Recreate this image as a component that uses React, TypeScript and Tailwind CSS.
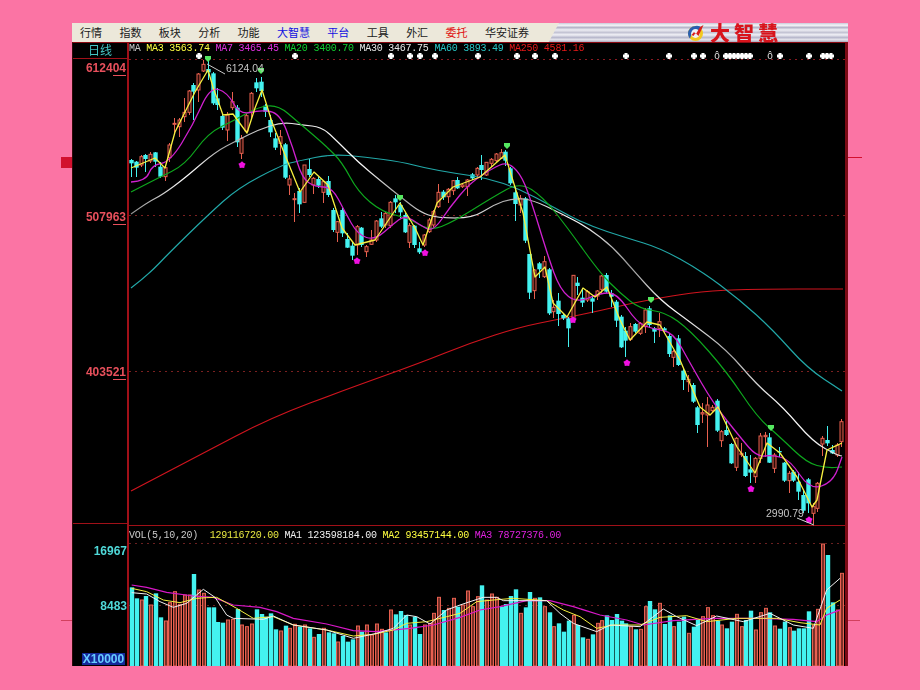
const MENU: [string, string][] = [
  ["行情", "text-[#202020]"], ["指数", "text-[#202020]"], ["板块", "text-[#202020]"], ["分析", "text-[#202020]"],
  ["功能", "text-[#202020]"], ["大智慧", "text-[#1010e0]"], ["平台", "text-[#1010e0]"], ["工具", "text-[#202020]"],
  ["外汇", "text-[#202020]"], ["委托", "text-[#e01010]"], ["华安证券", "text-[#202020]"],
];

type C = [string, number, number, number, number];
// candle data in 3x crop units: [kind, body top, body bottom, wick top, wick bottom]
const S1: C[] = [
  ["c",315,325,312,365],["c",320,338,318,365],["r",305,330,300,335],["c",300,312,296,350],["r",298,318,292,325],["c",292,320,290,335],["c",335,365,320,370],["r",338,365,330,378],
  ["r",270,308,265,320],["r",205,208,190,235],["r",195,215,190,245],["r",172,185,130,200],["r",108,172,105,180],["c",90,110,85,195],["r",57,105,55,140],["r",28,48,15,50],
  ["c",42,52,15,75],["c",55,145,50,150],["c",130,150,100,165],["c",183,218,175,225],["r",180,225,170,258],["r",140,158,110,165],["c",158,262,150,275],["r",250,295,240,312],
  ["r",182,228,175,235],["r",115,172,112,190],["c",82,100,70,112],["c",80,108,65,125],["c",152,170,148,185],["c",195,232,180,245],["c",250,278,235,285],["r",245,265,225,300],
  ["c",268,368,265,372],["r",372,390,360,420],["r",431,434,415,500],["c",408,448,400,475],["r",330,442,330,445],["c",342,360,312,365],["r",370,390,365,418],["c",372,392,365,400],
  ["r",380,412,378,445],["c",378,420,362,425],["c",465,525,460,530],["r",500,532,498,560],["c",465,535,460,545],["c",552,578,535,580],["c",572,602,560,615],["r",515,570,510,600],
  ["c",518,570,515,575],["r",575,590,570,605],["r",555,568,525,570],["r",498,555,495,560],["c",490,515,470,520],["r",475,510,470,520],["r",442,512,438,520],["c",430,442,420,475],
  ["c",450,472,440,490],["c",480,532,475,535],["r",512,562,505,578],["c",512,570,510,580],["c",580,592,560,598],
];
const S2: C[] = [
  ["r",315,345,312,350],["r",270,305,265,310],["r",245,285,240,290],["r",187,230,163,235],["c",185,202,180,210],["r",178,200,175,220],["r",152,182,150,195],["c",150,175,142,178],
  ["r",165,170,160,175],["r",150,170,148,198],["c",133,145,128,150],["r",115,135,112,140],["c",105,120,75,150],["r",97,135,95,138],["r",88,100,85,110],["r",72,92,70,95],
  ["r",68,85,58,88],["c",65,92,60,108],["c",115,160,112,165],["c",187,222,170,272],["r",205,225,195,250],["c",205,332,200,340],["c",372,488,372,508],["r",420,482,418,508],
  ["c",400,418,395,445],["r",395,440,378,445],["c",418,550,415,555],["r",532,545,510,565],["c",512,552,490,588],["c",555,565,550,570],["c",565,595,560,650],["r",436,565,435,570],
  ["c",458,468,442,495],["c",503,518,475,530],["r",485,510,480,515],["c",505,515,500,548],["r",483,498,480,510],["r",438,478,436,490],["c",435,485,430,490],["c",490,500,480,530],
  ["c",515,572,510,590],["c",560,652,555,655],["c",602,632,590,682],["r",590,628,578,632],["c",582,605,580,610],["r",580,610,575,615],
];
const S3: C[] = [
  ["r",30,80,25,100],["c",25,75,18,85],["c",85,95,80,130],["r",65,85,38,110],["c",85,92,80,98],["c",108,162,100,170],["r",155,172,150,200],["c",115,195,105,198],
  ["c",212,240,205,270],["r",238,245,225,275],["c",255,305,250,310],["c",322,375,318,400],["r",338,342,310,370],["r",315,345,290,440],["r",322,332,315,340],["c",302,392,298,395],
  ["r",395,422,390,440],["c",390,405,362,408],["c",432,490,428,492],["r",415,502,410,512],["r",460,464,430,470],["c",468,528,455,530],["c",508,518,465,548],["r",475,530,470,550],
  ["r",408,475,400,490],["r",406,410,395,470],["c",412,488,400,490],["r",465,505,460,518],["c",453,457,440,470],["c",488,542,485,545],["r",520,542,512,580],["c",515,542,510,545],
  ["c",545,575,515,600],["c",585,632,570,640],["c",538,610,535,640],["r",620,640,610,672],["r",550,625,545,635],["r",415,432,408,468],["c",420,430,378,438],["c",450,460,435,462],
  ["r",435,465,430,470],["r",365,425,358,440],
];
const CANDLES: C[] = [
  ...S1.map((c): C => [c[0], 55 + c[1] / 3, 55 + c[2] / 3, 55 + c[3] / 3, 55 + c[4] / 3]),
  ...S2.map((c): C => [c[0], 130 + c[1] / 3, 130 + c[2] / 3, 130 + c[3] / 3, 130 + c[4] / 3]),
  ...S3.map((c): C => [c[0], 300 + c[1] / 3, 300 + c[2] / 3, 300 + c[3] / 3, 300 + c[4] / 3]),
];

const VOL: [string, number][] = ([
  "c232","c265","r270","c258","r285","c250","c322","r333","r278","r245","r283","r255","r255","c192","r240","r250","c292","c292","c336","c338","r330","r328","c297","r345","r350","r342","c298","c312","c320","c310",
  "c358","r363","c347","r355","r343","c350","r345","c355","r382","c372","r355","c367","c370","r396","c378","c395","c388","r348","c365","r345","r375","r342","r358","c367","r300","c313","c303","c315","r345","c320",
  "c372","r345","r340","r310","r262","c300","r295","r265","c290","r285","r243","r290","r260","c226","r270","r252","r262","c290","c282","c258","c238","r310","c292","c246","r265","c262","r290","c307","r350","c340",
  "c365","c332","r316","c345","c382","r388","c373","r340","r332","c316","c330","c312","c332","c340","r350","c358","r358","r290","c273","c298","r280","c342","c316","r350","c335","c320","r370","c350","c330","r320",
  "r293","r317","c332","r345","c355","c335","r313","r350","c330","c302","r360","r308","r295","c307","r348","c356","c335","r353","c362","c355","c355","c304","r345","r298","r102","c135","c277","r300","r190",
] as string[]).map((s): [string, number] => [s[0], 510 + Number(s.slice(1)) / 3]);

type P = [number, number][];
const MA250: P = [[131,491],[200,455],[270,418],[350,388],[420,363],[470,343],[520,327],[560,319],[603,310],[633,303],[660,298],[700,291.5],[750,289],[843,289]];
const MA60: P = [[131,288],[148,275],[170,252],[208,215],[238,188],[282,165],[298,161],[332,154],[365,157],[402,162],[425,168],[453,173],[487,178],[520,189],[553,207],[587,225],[627,238],[660,248],[700,270],[740,300],[773,330],[807,368],[842,391]];
const MA30: P = [[131,214],[148,202],[162,195],[185,178],[215,152],[238,140],[258,130],[282,122],[302,125],[322,127],[338,142],[358,162],[382,182],[402,198],[420,212],[437,218],[473,218],[493,205],[513,198],[533,200],[560,213],[587,227],[613,247],[633,270],[660,300],[690,322],[727,350],[757,385],[783,407],[813,442],[837,455],[842,456]];
const MA20: P = [[131,192],[158,178],[185,165],[208,133],[235,120],[258,107],[278,105],[298,122],[325,145],[342,162],[358,192],[382,212],[408,218],[430,231],[453,222],[493,197],[520,182],[543,197],[567,227],[600,273],[620,293],[640,309],[665,312],[690,330],[727,372],[757,417],[780,437],[807,463],[827,468],[842,467]];
const MA7: P = [[131,182],[146,181],[152,165],[170,162],[193,125],[210,87],[227,92],[240,115],[260,110],[280,113],[293,148],[302,178],[315,187],[332,187],[345,212],[358,235],[375,240],[392,225],[405,215],[420,225],[433,232],[450,207],[470,183],[493,168],[507,162],[520,173],[530,197],[547,253],[560,290],[577,303],[600,293],[617,293],[637,323],[653,329],[673,332],[690,363],[713,403],[740,437],[757,457],[773,455],[790,460],[810,490],[833,482],[842,457]];
const MA3: P = [[131,168],[155,158],[165,168],[175,132],[195,92],[208,70],[213,87],[223,115],[233,114],[247,133],[255,108],[262,90],[272,122],[285,155],[300,192],[314,172],[328,185],[342,228],[355,245],[375,240],[400,203],[415,228],[423,245],[437,203],[453,187],[480,177],[505,155],[523,213],[535,277],[545,267],[553,303],[567,317],[583,288],[595,297],[607,287],[620,320],[630,340],[647,322],[660,325],[680,360],[700,407],[710,415],[718,407],[737,447],[755,473],[767,443],[780,453],[797,477],[812,507],[817,500],[827,450],[842,443]];

const z3 = (pts: number[][]): P => pts.map(([x, y]) => [60 + x / 3, 510 + y / 3]);
const z4 = (pts: number[][]): P => pts.map(([x, y]) => [460 + x / 3, 510 + y / 3]);
const VM: P = [...z3([[215,225],[260,232],[320,247],[400,258],[460,262],[520,285],[600,292],[650,305],[700,325],[800,342],[880,362],[950,365],[1050,355],[1120,345],[1200,322]]), ...z4([[60,300],[120,290],[200,272],[270,272],[340,290],[420,315],[500,330],[550,345],[640,332],[760,325],[900,325],[1000,328],[1070,335],[1100,315],[1140,300]])];
const VY: P = [...z3([[215,235],[260,245],[310,270],[360,278],[410,265],[440,263],[470,262],[530,295],[580,325],[640,320],[700,345],[800,360],[880,378],[940,373],[1000,360],[1040,340],[1100,335],[1160,320],[1200,310]]), ...z4([[50,275],[100,270],[160,265],[260,272],[310,300],[360,320],[410,355],[460,345],[540,345],[600,322],[680,317],[740,335],[830,325],[950,325],[1020,338],[1080,345],[1100,295],[1140,270]])];
const VW: P = [...z3([[215,248],[260,252],[300,275],[340,292],[380,280],[430,238],[465,262],[500,315],[520,325],[610,328],[640,318],[700,345],[800,360],[880,385],[950,370],[1000,355],[1040,315],[1070,320],[1110,342],[1160,300],[1200,285]]), ...z4([[30,275],[70,262],[110,262],[130,272],[260,272],[300,310],[340,340],[410,365],[450,345],[540,350],[580,320],[610,297],[650,320],[710,347],[770,318],[850,335],[930,310],[1000,345],[1060,355],[1100,240],[1140,205]])];

const poly = (p: P) => p.map(([x, y]) => `${x},${y}`).join(" ");
const smooth = (p: P) => {
  let d = `M${p[0][0]} ${p[0][1]}`;
  for (let i = 1; i < p.length - 1; i++) {
    const mx = (p[i][0] + p[i + 1][0]) / 2;
    const my = (p[i][1] + p[i + 1][1]) / 2;
    d += ` Q${p[i][0]} ${p[i][1]} ${mx} ${my}`;
  }
  const l = p[p.length - 1];
  return d + ` L${l[0]} ${l[1]}`;
};

const BLOBS = [199,295,391,410,420,435,478,517,535,555,626,669,694,703,726,730,734,738,742,746,750,780,809,823,827,831];
const GREEN = [[208,59],[261,71],[400,198],[507,146],[651,300],[771,428]];
const PINK = [[242,165],[357,261],[425,253],[573,320],[627,363],[751,489],[809,520]];
const star = (x: number, y: number, r: number) => {
  const out: string[] = [];
  for (let i = 0; i < 10; i++) {
    const a = -Math.PI / 2 + (i * Math.PI) / 5;
    const rr = i % 2 ? r * 0.72 : r;
    out.push(`${x + rr * Math.cos(a)},${y + rr * Math.sin(a)}`);
  }
  return out.join(" ");
};

const MONO = "font-['Liberation_Mono',monospace] text-[10px] tracking-[-0.24px] leading-[12px] whitespace-pre";
const RED = "#e8604f";
const CY = "#44f2f0";

function Logo() {
  return (
    <svg width="18" height="18" viewBox="0 0 18 18" className="shrink-0">
      <circle cx="8.5" cy="9.5" r="7.5" fill="#f2c81e" />
      <path d="M8.5 2a7.5 7.5 0 0 0-7.5 7.5c0 2 .8 3.8 2 5L5 9a5 5 0 0 1 8-2l2-3A7.5 7.5 0 0 0 8.5 2z" fill="#2a5fb0" />
      <circle cx="8.5" cy="9.5" r="4.4" fill="#eef2f6" />
      <path d="M4.5 11l2.5-3 2 2 4-7 3.5-2-5 11-3-3-2 3z" fill="#d8201c" />
    </svg>
  );
}

export default function App() {
  return (
    <div className="relative w-[920px] h-[690px] overflow-hidden bg-[#fb74a4] pt-[23px] pl-[72px]">
      <div className="absolute left-[61px] top-[157px] w-[12px] h-[11px] bg-[#d2102e]" />
      <div className="absolute left-[848px] top-[157px] w-[14px] h-px bg-[#d2102e]" />
      <div className="absolute left-[61px] top-[620px] w-[12px] h-px bg-[#d2405e]" />
      <div className="absolute left-[848px] top-[620px] w-[12px] h-px bg-[#d2405e]" />

      <div className="w-[776px] h-[643px] flex flex-col [filter:blur(0.35px)]">
        <div className="h-[19px] shrink-0 flex items-stretch bg-[linear-gradient(180deg,#c8c8d8_0%,#f4f4f8_12%,#b4b4c8_24%,#eeeef4_36%,#c4c4d4_50%,#f0f0f6_62%,#b8b8cc_76%,#e4e4ec_88%,#a8a8bc_100%)]">
          <div className="w-[487px] flex items-center gap-[17.4px] pl-[8px] bg-[#ece8da] [clip-path:polygon(0_0,100%_0,97.9%_100%,0_100%)] font-['Noto_Sans_CJK_SC',sans-serif] text-[11px] leading-none">
            {MENU.map(([t, c]) => (
              <span key={t} className={c}>{t}</span>
            ))}
          </div>
          <div className="flex items-center gap-[5px] pl-[128px]">
            <Logo />
            <span className="font-['Noto_Sans_CJK_SC',sans-serif] font-black text-[20px] leading-none tracking-[4px] text-[#d8141c]">大智慧</span>
          </div>
        </div>

        <div className="flex-1 flex bg-black border-t border-t-[#8a0a12] border-l border-l-[#300a0a] min-h-0">
          <div className="w-[56px] shrink-0 flex flex-col border-r-2 border-r-[#a01018]">
            <div className="h-[16px] shrink-0 border-b border-b-[#a01018] text-center text-[12px] leading-[14px] font-['Noto_Sans_CJK_SC',sans-serif] text-[#45c4c4]">日线</div>
            <div className="h-[465px] shrink-0 border-b border-b-[#a01018] flex flex-col items-end pr-[1px] font-['Liberation_Sans',sans-serif] font-bold text-[12px] leading-[14px] text-[#e8505c]">
              <span className="mt-[2px]">6124<span className="border-b border-b-[#e8505c]">04</span></span>
              <span className="mt-[135px]">5079<span className="border-b border-b-[#e8505c]">63</span></span>
              <span className="mt-[141px]">4035<span className="border-b border-b-[#e8505c]">21</span></span>
            </div>
            <div className="flex-1 flex flex-col items-end font-['Liberation_Sans',sans-serif] font-bold text-[12px] leading-[14px] text-[#4fd8d8]">
              <span className="mt-[20px]">16967</span>
              <span className="mt-[41px]">8483</span>
              <span className="mt-[40px] mr-[2px] w-[43px] h-[12px] bg-[#14289a] text-center text-[#66ccff] leading-[12px]">X10000</span>
            </div>
          </div>

          <div className="flex-1 flex flex-col min-w-0">
            <div className="relative shrink-0">
              <svg width="716" height="483" viewBox="129 43 716 483" className="block">
                <defs>
                  <linearGradient id="wht" gradientUnits="userSpaceOnUse" x1="131" y1="0" x2="843" y2="0">
                    <stop offset="0" stopColor="#909090" /><stop offset="0.08" stopColor="#ffffff" /><stop offset="0.13" stopColor="#a8a8a8" /><stop offset="0.22" stopColor="#e0e0e0" /><stop offset="0.32" stopColor="#ffffff" /><stop offset="0.38" stopColor="#a0a0a0" /><stop offset="0.45" stopColor="#fff" /><stop offset="0.53" stopColor="#aaa" /><stop offset="0.62" stopColor="#fff" /><stop offset="0.7" stopColor="#999" /><stop offset="0.76" stopColor="#fff" /><stop offset="0.84" stopColor="#aaa" /><stop offset="0.92" stopColor="#fff" /><stop offset="1" stopColor="#ddd" />
                  </linearGradient>
                </defs>
                <line x1="129" y1="59.5" x2="845" y2="59.5" stroke="#8a1a22" strokeDasharray="2 4" />
                <line x1="129" y1="215.5" x2="845" y2="215.5" stroke="#7a2020" strokeDasharray="2 4" />
                <line x1="129" y1="371.5" x2="845" y2="371.5" stroke="#7a2020" strokeDasharray="2 4" />
                <line x1="129" y1="525.5" x2="845" y2="525.5" stroke="#a01018" />

                {BLOBS.map((x, i) => (
                  <path key={i} d={`M${x - 1.5} 53h3v1.5h1.5v3h-1.5v1.5h-3v-1.5h-1.5v-3h1.5z`} fill="#fff" />
                ))}
                <text x="717" y="59" textAnchor="middle" fontSize="10" fill="#ddd" fontFamily="Liberation Sans, sans-serif">ô</text>
                <text x="770" y="59" textAnchor="middle" fontSize="10" fill="#ddd" fontFamily="Liberation Sans, sans-serif">ô</text>

                <path d={smooth(MA250)} fill="none" stroke="#d0141e" strokeWidth="1.2" />
                {CANDLES.map((c, i) => {
                  const x = Math.round(131 + 4.8 * i);
                  const col = c[0] === "c" ? CY : RED;
                  return (
                    <g key={i}>
                      <line x1={x + 0.5} x2={x + 0.5} y1={c[3]} y2={c[4]} stroke={col} shapeRendering="crispEdges" />
                      {c[0] === "c" ? (
                        <rect x={x - 1.7} y={c[1]} width="4.4" height={c[2] - c[1]} fill={CY} />
                      ) : (
                        <rect x={x - 1} y={c[1]} width="3" height={c[2] - c[1]} fill="#2a0c08" stroke={RED} />
                      )}
                    </g>
                  );
                })}
                <path d={smooth(MA60)} fill="none" stroke="#22a8a8" strokeWidth="1.2" />
                <path d={smooth(MA30)} fill="none" stroke="url(#wht)" strokeWidth="1.2" />
                <path d={smooth(MA20)} fill="none" stroke="#0ea81e" strokeWidth="1.2" />
                <path d={smooth(MA7)} fill="none" stroke="#d020d0" strokeWidth="1.3" />
                <polyline points={poly(MA3)} fill="none" stroke="#f8f040" strokeWidth="1.3" strokeLinejoin="round" />

                {GREEN.map(([x, y], i) => (
                  <polygon key={i} points={`${x - 3},${y - 3} ${x + 3},${y - 3} ${x + 3},${y} ${x},${y + 3} ${x - 3},${y}`} fill="#55e860" />
                ))}
                {PINK.map(([x, y], i) => (
                  <polygon key={i} points={star(x, y, 3.8)} fill="#f010e0" />
                ))}

                <polyline points="207,64 225,74" fill="none" stroke="#c8c8c8" />
                <text x="226" y="72" fontSize="10.5" fill="#c4c4c4" fontFamily="Liberation Sans, sans-serif">6124.04</text>
                <polyline points="797,518 814,525" fill="none" stroke="#d8d8d8" />
                <text x="766" y="517" fontSize="10.5" fill="#c4c4c4" fontFamily="Liberation Sans, sans-serif">2990.79</text>
              </svg>
              <div className={`absolute left-0 top-0 ${MONO}`}>
                <span className="text-[#c8c8c8]">MA </span>
                <span className="text-[#ffff40]">MA3 3563.74 </span>
                <span className="text-[#e030e0]">MA7 3465.45 </span>
                <span className="text-[#10d030]">MA20 3400.70 </span>
                <span className="text-[#e8e8e8]">MA30 3467.75 </span>
                <span className="text-[#28c8c8]">MA60 3893.49 </span>
                <span className="text-[#e81818]">MA250 4581.16</span>
              </div>
            </div>
            <div className="relative flex-1 min-h-0">
              <svg width="716" height="140" viewBox="129 526 716 140" className="block">
                <line x1="129" y1="543.5" x2="845" y2="543.5" stroke="#6a2020" strokeDasharray="2 4" />
                <line x1="129" y1="605.5" x2="845" y2="605.5" stroke="#6a2020" strokeDasharray="2 4" />
                {VOL.map(([k, top], i) => {
                  const x = Math.round(130 + 4.8 * i);
                  return k === "c" ? (
                    <rect key={i} x={x - 0.2} y={top} width="4.4" height={666 - top} fill={CY} />
                  ) : (
                    <rect key={i} x={x + 0.5} y={top} width="3" height={666 - top} fill="#7a3028" stroke="#e86050" />
                  );
                })}
                <polyline points={poly(VM)} fill="none" stroke="#d818c8" strokeWidth="1.2" />
                <polyline points={poly(VY)} fill="none" stroke="#f4f040" strokeWidth="1" />
                <polyline points={poly(VW)} fill="none" stroke="#f0f0f0" strokeWidth="1" />
              </svg>
              <div className={`absolute left-0 top-[4px] ${MONO}`}>
                <span className="text-[#c8c8c8]">VOL(5,10,20)  </span>
                <span className="text-[#e8e840]">129116720.00 </span>
                <span className="text-[#f0f0f0]">MA1 123598184.00 </span>
                <span className="text-[#ffff40]">MA2 93457144.00 </span>
                <span className="text-[#e020e0]">MA3 78727376.00</span>
              </div>
            </div>
          </div>
          <div className="w-[3px] shrink-0 bg-[#7a0a14]" />
        </div>
      </div>
    </div>
  );
}
